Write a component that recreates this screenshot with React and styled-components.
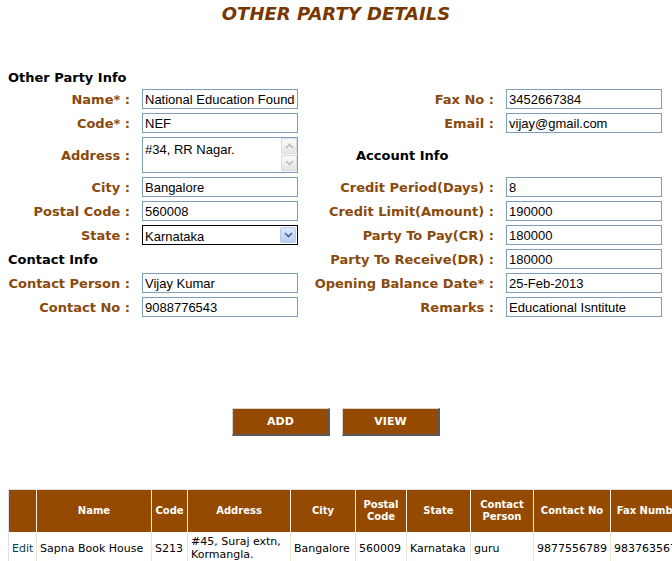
import React from "react";
import styled, { createGlobalStyle } from "styled-components";

const GlobalStyle = createGlobalStyle`
  html, body {
    margin: 0;
    padding: 0;
    background: #fff;
    overflow: hidden;
  }
  body {
    font-family: "DejaVu Sans", Verdana, sans-serif;
  }
`;

const Page = styled.div`
  width: 672px;
`;

const Title = styled.h1`
  margin: 3px 0 0;
  height: 22px;
  line-height: 22px;
  text-align: center;
  font-family: "DejaVu Sans", Verdana, sans-serif;
  font-size: 18px;
  font-weight: bold;
  font-style: italic;
  color: #773800;
`;

const Form = styled.div`
  display: grid;
  grid-template-columns: 122px 156px 184px 156px;
  grid-template-rows: 24px 24px 24px 40px 24px 24px 24px 24px 24px 24px;
  column-gap: 12px;
  align-items: center;
  margin: 38px 0 0 8px;
`;

const Heading = styled.div`
  grid-column: span ${(p) => p.$span || 1};
  padding: ${(p) => p.$top || 0}px 0 0 ${(p) => p.$indent || 0}px;
  font-size: 13px;
  font-weight: bold;
  color: #000;
  white-space: nowrap;
`;

const Blank = styled.div`
  grid-column: span ${(p) => p.$span || 1};
`;

const Label = styled.label`
  text-align: right;
  font-size: 13px;
  font-weight: bold;
  color: #8a4a0c;
  white-space: nowrap;
`;

const TextInput = styled.input`
  box-sizing: border-box;
  width: 156px;
  height: 20px;
  margin: 0;
  padding: 0 2px;
  border: 1px solid #7f9db9;
  font-family: "Liberation Sans", Arial, sans-serif;
  font-size: 13px;
  color: #000;
  background: #fff;
  outline: none;
`;

const AreaBox = styled.div`
  box-sizing: border-box;
  width: 156px;
  height: 36px;
  display: flex;
  border: 1px solid #7f9db9;
  background: #fff;
`;

const Area = styled.textarea`
  flex: 1;
  min-width: 0;
  margin: 0;
  padding: 4px 2px 0;
  border: none;
  resize: none;
  overflow: hidden;
  outline: none;
  font-family: "Liberation Sans", Arial, sans-serif;
  font-size: 13px;
  line-height: 15px;
  color: #000;
`;

const ScrollBar = styled.div`
  width: 16px;
  display: flex;
  flex-direction: column;
  background: #f4f4f0;
`;

const ScrollButton = styled.div`
  box-sizing: border-box;
  width: 16px;
  height: 16px;
  margin-bottom: 1px;
  display: flex;
  align-items: center;
  justify-content: center;
  border: 1px solid #d8dde6;
  border-radius: 2px;
  background: linear-gradient(#fafaf8, #e6e6e0);
`;

const SelectBox = styled.div`
  position: relative;
  box-sizing: border-box;
  width: 156px;
  height: 20px;
  border: 1px solid #000;
  background: #fff;
`;

const Select = styled.select`
  appearance: none;
  width: 100%;
  height: 100%;
  margin: 0;
  padding: 0 2px;
  border: none;
  outline: none;
  background: transparent;
  font-family: "Liberation Sans", Arial, sans-serif;
  font-size: 13px;
  color: #000;
`;

const DropButton = styled.div`
  position: absolute;
  top: 1px;
  right: 1px;
  box-sizing: border-box;
  width: 16px;
  height: 16px;
  display: flex;
  align-items: center;
  justify-content: center;
  border: 1px solid #b6c8ec;
  border-radius: 2px;
  background: linear-gradient(#dce8fc, #b9cef5);
  pointer-events: none;
`;

const Buttons = styled.div`
  display: flex;
  justify-content: center;
  gap: 12px;
  margin-top: 89px;
`;

const Button = styled.button`
  box-sizing: border-box;
  width: 98px;
  height: 28px;
  margin: 0;
  padding: 0;
  background: #944a00;
  border-style: solid;
  border-width: 1px 2px 2px 1px;
  border-color: #d8d4cc #5a5a5a #5a5a5a #d8d4cc;
  color: #fff;
  font-family: "DejaVu Sans", Verdana, sans-serif;
  font-size: 11px;
  font-weight: bold;
`;

const TableWrap = styled.div`
  margin: 53px 0 0 8px;
  overflow: hidden;
`;

const Table = styled.table`
  table-layout: fixed;
  width: 683px;
  border-collapse: collapse;
  border-top: 1px solid #dcdcf2;
  border-left: 1px solid #dcdcf2;
`;

const Th = styled.th`
  height: 42px;
  padding: 0 2px;
  background: #944a00;
  border-right: 1px solid #f6efe2;
  color: #fff;
  font-size: 10px;
  font-weight: bold;
  line-height: 12px;
  text-align: center;
  vertical-align: middle;
  white-space: ${(p) => (p.$nowrap ? "nowrap" : "normal")};
  overflow: hidden;
`;

const Td = styled.td`
  padding: 3px 3px 2px;
  border-right: 1px solid #ece4d2;
  color: ${(p) => (p.$link ? "#073b52" : "#000")};
  font-size: 11px;
  line-height: 13px;
  vertical-align: middle;
  white-space: ${(p) => (p.$wrap ? "normal" : "nowrap")};
  overflow: hidden;
`;

const Chevron = ({ up, color }) => (
  <svg width="9" height="6" viewBox="0 0 9 6">
    <path
      d={up ? "M1 5 L4.5 1.5 L8 5" : "M1 1 L4.5 4.5 L8 1"}
      fill="none"
      stroke={color}
      strokeWidth="1.6"
    />
  </svg>
);

const columns = [
  { title: "", width: 28 },
  { title: "Name", width: 115 },
  { title: "Code", width: 36 },
  { title: "Address", width: 103 },
  { title: "City", width: 65 },
  { title: "Postal Code", width: 51 },
  { title: "State", width: 64 },
  { title: "Contact Person", width: 63 },
  { title: "Contact No", width: 77 },
  { title: "Fax Number", width: 80, nowrap: true },
];

const row = [
  "Sapna Book House",
  "S213",
  "#45, Suraj extn, Kormangla.",
  "Bangalore",
  "560009",
  "Karnataka",
  "guru",
  "9877556789",
  "9837635678",
];

const Field = ({ label, value }) => (
  <>
    <Label>{label}</Label>
    <TextInput defaultValue={value} readOnly />
  </>
);

const App = () => {
  return (
    <Page>
      <GlobalStyle />
      <Title>OTHER PARTY DETAILS</Title>
      <Form>
        <Heading $span={2} $top={4}>
          Other Party Info
        </Heading>
        <Blank $span={2} />

        <Field label="Name* :" value="National Education Foundation" />
        <Field label="Fax No :" value="3452667384" />

        <Field label="Code* :" value="NEF" />
        <Field label="Email :" value="vijay@gmail.com" />

        <Label>Address :</Label>
        <AreaBox>
          <Area defaultValue="#34, RR Nagar." readOnly />
          <ScrollBar>
            <ScrollButton>
              <Chevron up color="#b4bccb" />
            </ScrollButton>
            <ScrollButton>
              <Chevron color="#b4bccb" />
            </ScrollButton>
          </ScrollBar>
        </AreaBox>
        <Heading $span={2} $indent={46}>
          Account Info
        </Heading>

        <Field label="City :" value="Bangalore" />
        <Field label="Credit Period(Days) :" value="8" />

        <Field label="Postal Code :" value="560008" />
        <Field label="Credit Limit(Amount) :" value="190000" />

        <Label>State :</Label>
        <SelectBox>
          <Select defaultValue="Karnataka">
            <option>Karnataka</option>
            <option>Kerala</option>
            <option>Tamil Nadu</option>
          </Select>
          <DropButton>
            <Chevron color="#4d6185" />
          </DropButton>
        </SelectBox>
        <Field label="Party To Pay(CR) :" value="180000" />

        <Heading $span={2}>Contact Info</Heading>
        <Field label="Party To Receive(DR) :" value="180000" />

        <Field label="Contact Person :" value="Vijay Kumar" />
        <Field label="Opening Balance Date* :" value="25-Feb-2013" />

        <Field label="Contact No :" value="9088776543" />
        <Field label="Remarks :" value="Educational Isntitute" />
      </Form>

      <Buttons>
        <Button>ADD</Button>
        <Button>VIEW</Button>
      </Buttons>

      <TableWrap>
        <Table>
          <colgroup>
            {columns.map((c, i) => (
              <col key={i} style={{ width: c.width }} />
            ))}
          </colgroup>
          <thead>
            <tr>
              {columns.map((c, i) => (
                <Th key={i} $nowrap={c.nowrap}>
                  {c.title}
                </Th>
              ))}
            </tr>
          </thead>
          <tbody>
            <tr>
              <Td $link>Edit</Td>
              {row.map((v, i) => (
                <Td key={i} $wrap={i === 2}>
                  {v}
                </Td>
              ))}
            </tr>
          </tbody>
        </Table>
      </TableWrap>
    </Page>
  );
};

export default App;
